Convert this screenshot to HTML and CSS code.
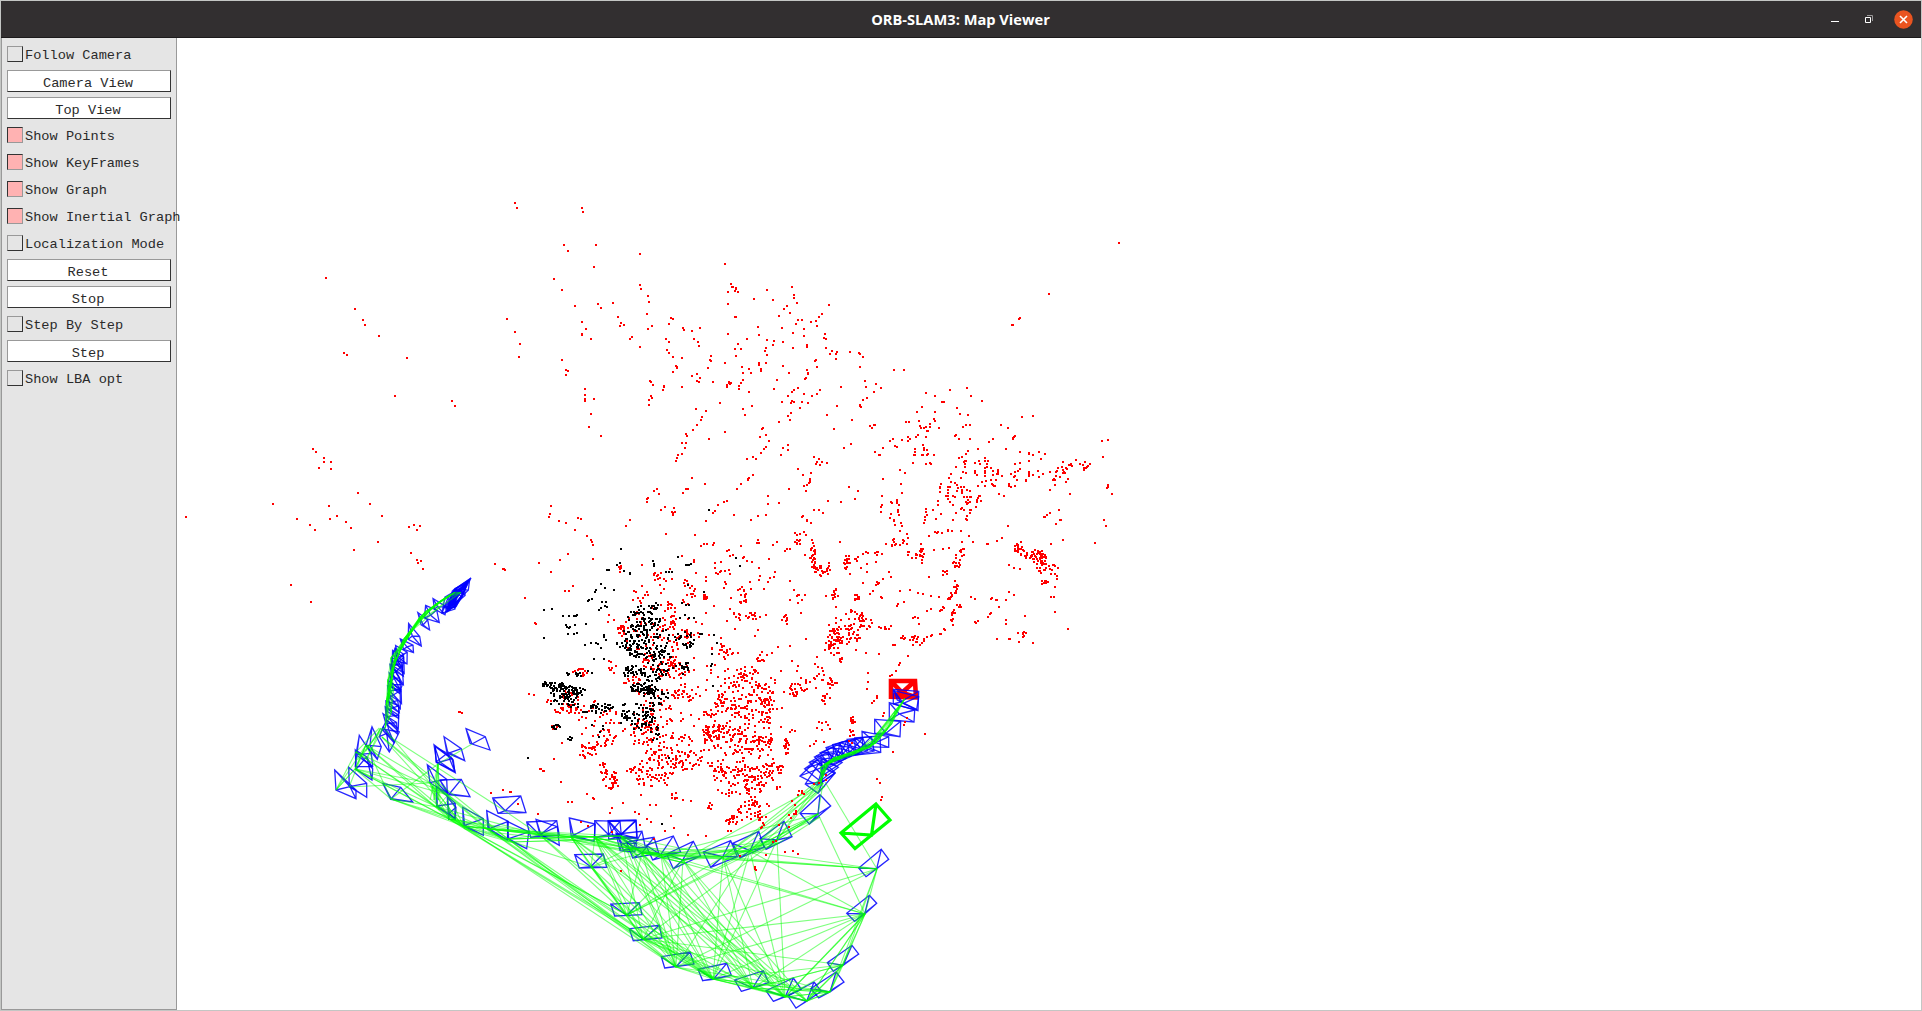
FILE: index.html
```html
<!DOCTYPE html>
<html lang="en">
<head>
<meta charset="utf-8">
<title>ORB-SLAM3: Map Viewer</title>
<link rel="stylesheet" href="styles.css">
</head>
<body>
<div class="window">
  <header class="titlebar">
    <h1 class="title">ORB-SLAM3: Map Viewer</h1>
    <div class="controls">
      <svg class="ctl" width="10" height="18" viewBox="0 0 10 18"><path d="M1 11.5h8" stroke="#fff" fill="none"/></svg>
      <svg class="ctl" width="10" height="18" viewBox="0 0 10 18"><path d="M3 5.5h5.5V11" stroke="#9a9898" fill="none"/><path d="M1.500 7.500h5v5h-5z" stroke="#fff" fill="none"/></svg>
      <svg class="ctl" width="19" height="19" viewBox="0 0 19 19"><circle cx="9.500" cy="9.500" r="9.300" fill="#e95420"/><path d="M6 6l7 7M13 6l-7 7" stroke="#fff" stroke-width="1.600" fill="none"/></svg>
    </div>
  </header>
  <main class="body">
    <aside class="panel">
      <label class="row"><span class="box"></span>Follow Camera</label>
      <button class="btn">Camera View</button>
      <button class="btn">Top View</button>
      <label class="row"><span class="box on"></span>Show Points</label>
      <label class="row"><span class="box on"></span>Show KeyFrames</label>
      <label class="row"><span class="box on"></span>Show Graph</label>
      <label class="row"><span class="box on"></span>Show Inertial Graph</label>
      <label class="row"><span class="box"></span>Localization Mode</label>
      <button class="btn">Reset</button>
      <button class="btn">Stop</button>
      <label class="row"><span class="box"></span>Step By Step</label>
      <button class="btn">Step</button>
      <label class="row"><span class="box"></span>Show LBA opt</label>
    </aside>
    <section class="view"><svg id="map" class="map" width="1744" height="972" viewBox="177 38 1744 972"></svg></section>
  </main>
</div>
<script src="map.js"></script>
</body>
</html>
```
FILE: styles.css
```css
* { box-sizing: border-box; }
body { margin: 0; background: #c4c4c4; }
.window {
  width: 1922px;
  height: 1011px;
  border: 1px solid #c4c6c4;
  display: flex;
  flex-direction: column;
  overflow: hidden;
}
.titlebar {
  height: 37px;
  flex: none;
  background: #322f30;
  border-bottom: 1px solid #1c1a1b;
  display: grid;
  grid-template-columns: 1fr auto 1fr;
  align-items: center;
  padding-right: 8px;
}
.title {
  grid-column: 2;
  margin: 0 0 0 7px;
  padding-top: 1px;
  font: 700 14.65px/35px "Open Sans", "Noto Sans", sans-serif;
  color: #fff;
  white-space: nowrap;
}
.controls { display: flex; justify-content: flex-end; align-items: center; }
.ctl { display: block; margin-left: 24px; }
.ctl:last-child { margin-left: 20px; }
.body { flex: 1; display: flex; min-height: 0; }
.panel {
  width: 176px;
  flex: none;
  background: #e5e5e5;
  border: 1px solid #999;
  border-top: 0;
  padding: 5px 5px 0;
  display: flex;
  flex-direction: column;
  gap: 5px;
  font: 13.65px/26px "Liberation Mono", monospace;
  color: #2a2a2a;
  position: relative;
  z-index: 1;
}
.row { height: 22px; display: flex; align-items: flex-start; gap: 2px; white-space: nowrap; }
.box {
  width: 16px;
  height: 16px;
  flex: none;
  margin-top: 3px;
  border: 1px solid;
  border-color: #999 #333 #333 #999;
}
.box.on { background: #ffb2b2; border-color: #333 #999 #999 #333; }
.btn {
  width: 164px;
  height: 22px;
  padding: 3px 2px 0 0;
  border: 1px solid;
  border-color: #999 #333 #333 #999;
  border-radius: 0;
  background: #fff;
  font: 13.65px/19px "Liberation Mono", monospace;
  color: #2a2a2a;
}
.view { flex: 1; background: #fff; }
.map { display: block; }
.dots-red { fill: #f00; shape-rendering: crispEdges; }
.dots-black { fill: #000; shape-rendering: crispEdges; }
.keyframe { fill: none; stroke: #00f; stroke-width: 1.3; stroke-opacity: .85; }
.edges { fill: none; stroke: #0f0; stroke-width: 1.1; stroke-opacity: .5; }
.camera { fill: none; stroke: #0f0; stroke-width: 3.2; }
.tracked { fill: none; stroke: #f00; stroke-width: 4.6; }
```
FILE: map.js
```js
// Map geometry is stored per tile: an origin in window pixels and coordinates in thirds of a pixel.
const TILE = { A: [540, 240], B: [860, 300], C: [780, 520], D: [540, 520], E: [620, 760], F: [320, 560] };

const red = {
A: `72 15 84 33 168 15 162 81 300 42 42 117 66 150 105 198 126 246 138 267 126 282 126 285 153 297 174 192 183 204 219 189 234 231 243 249 240 258 252 255 276 291 270 297 300 321 300 135 303 147 324 168 327 186 321 222 336 258 324 267 555 72 573 132 576 141 579 141 588 144 588 147 585 153 594 156 564 156 564 192 585 231 588 231 642 177 681 150 699 180 756 141 762 165 762 174 771 189 741 198 732 207 750 219 717 228 774 240 786 240 768 252 813 246 828 243 837 231 846 222 867 195 831 258 792 267 792 288 759 279 726 264 729 306 702 303 699 315 681 300 654 261 657 285 621 297 594 312 585 327 603 327 564 282 588 348 555 369 393 234 399 237 387 252 378 297 387 306 381 330 387 339 399 351 426 354 408 378 411 384 411 381 399 396 429 264 432 270 456 273 480 264 462 297 474 306 477 318 513 348 510 360 513 363 504 384 471 402 480 414 471 423 477 426 456 408 519 426 426 441 372 438 372 441 369 450 330 423 333 426 339 435 333 468 336 474 327 480 327 495 66 360 78 390 84 393 78 405 135 447 135 465 135 477 135 483 162 477 153 522 147 561 183 588 606 381 609 399 627 387 633 399 609 420 603 429 597 438 597 447 567 426 567 429 573 429 570 432 561 435 561 438 561 441 627 456 657 369 657 375 663 387 663 393 678 369 681 345 675 333 678 324 711 420 702 447 747 399 729 378 759 324 801 315 801 321 855 282 852 294 858 297 858 324 870 342 876 333 891 336 888 342 888 357 828 360 825 363 831 381 801 390 804 399 804 402 798 414 795 417 930 336 957 339 960 342 969 351 960 381 975 423 978 441 1008 432 1002 456 981 474 969 480 960 495 960 498 963 501 903 441 891 498 840 450 831 462 816 468 792 462 774 444 762 450 756 456 744 468 756 483 753 489 762 486 726 486 786 486 804 489 780 504 753 519 744 528 750 540 717 546 861 525 882 567 936 540 990 558 996 564 1002 555 1005 555 933 612 912 624 1005 636 1018 645 540 489 636 498 609 507 615 525 468 507 498 513 486 531 483 540 471 555 459 570 438 582 441 588 426 609 438 609 435 624 426 642 414 645 411 654 408 663 555 576 507 597 666 567 669 564 660 591 678 585 687 603 678 621 672 627 663 639 744 615 744 630 729 624 723 645 639 651 648 657 621 657 639 705 627 714 624 717 624 720 603 732 591 747 456 714 495 732 438 747 444 747 429 759 351 747 342 753 357 762 324 774 321 777 321 786 375 801 363 810 402 804 396 816 399 819 405 816 399 825 561 783 552 786 534 795 525 813 519 819 582 825 633 840 654 828 678 825 684 768 684 792 717 789 747 747 774 687 789 705 813 699 810 717 810 723 810 726 807 729 801 735 792 738 798 753 822 651 837 657 831 666 828 672 846 666 840 675 861 669 927 741 954 753 945 777 903 786 864 783 822 810 837 810 849 819 789 828 786 831 801 840 33 798 30 822 27 831 114 834 123 837 270 840`,
B: `480 54 456 75 459 75 63 264 102 210 132 210 198 279 225 288 246 306 252 306 270 270 321 264 333 288 366 303 291 324 300 342 324 345 186 321 171 336 225 336 222 357 225 363 177 363 180 378 183 384 192 384 198 381 210 372 210 381 201 393 204 393 237 384 138 366 147 366 174 405 168 411 198 411 144 411 150 417 144 423 126 420 99 417 90 423 105 438 111 441 69 444 60 465 165 447 165 456 162 465 165 465 189 435 192 444 192 450 201 450 186 465 189 465 204 462 201 465 222 465 159 489 198 492 210 489 213 492 309 381 318 375 330 375 288 405 285 408 297 417 330 417 423 375 444 384 486 351 519 348 465 408 462 411 459 414 459 417 387 426 399 417 354 447 438 447 480 456 507 459 507 462 519 465 537 456 555 462 543 477 297 474 306 471 318 462 324 453 288 501 309 516 315 483 312 486 318 483 315 492 315 501 318 519 345 489 357 483 360 492 375 474 375 483 384 483 381 492 381 501 393 504 399 513 399 525 414 510 414 516 414 522 411 522 426 528 345 513 345 519 351 525 375 504 375 513 375 519 375 528 354 558 366 546 378 543 375 558 393 540 396 552 399 555 402 558 405 558 408 540 453 522 465 492 480 489 480 507 474 513 465 516 465 528 462 531 471 540 465 558 453 561 447 552 447 558 498 540 498 543 507 516 507 522 507 528 519 525 507 483 534 513 537 531 549 522 570 516 570 570 579 540 582 537 585 540 588 516 591 513 594 504 600 531 588 528 606 501 609 486 609 510 612 516 609 519 615 519 621 507 618 504 627 495 630 495 633 492 636 498 648 480 660 492 669 495 675 486 672 504 672 510 678 504 681 501 684 498 690 492 624 537 618 546 585 555 630 582 744 555 744 561 741 564 756 582 729 471 726 423 744 420 732 660 738 678 705 729 417 582 432 588 597 630 570 639 561 645 555 651 552 651 588 672 600 660 603 660 444 678 120 510 135 519 69 537 123 552 126 579 66 588 63 621 66 615 63 636 93 606 96 609 111 600 111 606 111 609 117 615 114 630 114 636 117 645 93 642 90 654 102 660 273 522 267 534 273 546 243 552 240 561 240 564 240 576 285 549 303 534 291 555 264 561 270 561 264 570 264 579 258 588 264 588 264 597 270 606 279 588 285 591 294 564 291 573 303 561 312 561 306 570 306 576 306 579 321 570 330 573 312 591 321 591 330 591 333 591 324 600 318 606 324 609 330 606 321 612 279 615 306 624 303 627 312 630 330 630 333 630 330 639 288 639 348 621 351 606 351 600 354 594 357 588 360 588 363 603 234 603 234 615 219 630 243 642 228 657 198 627 198 636 201 645 195 651 195 660 279 660 318 657 321 660 321 648`,
C: `264 459 264 486 261 507 276 549 282 543 291 528 291 534 330 468 336 465 348 453 360 429 384 408 297 402 258 399 339 375 345 375 435 642 339 696 375 605 372 615 381 594 312 579 309 588 864 327 759 369 717 366 690 357 687 357 651 357 714 339 735 288 678 300 678 312 825 276 813 231 822 231 825 201 573 231 585 237 633 237 636 234 648 240 651 240 657 261 678 240 687 216 702 225 633 279 630 282 624 291 702 144 720 147 687 135 621 72 624 72 651 63 666 54 684 18 828 12 813 72 849 60 579 66 567 48 543 33 546 66 504 30 504 33 516 33 486 39 471 39 465 36 474 36 447 48 432 9 363 9 366 18 342 3 345 15 360 33 381 42 384 54 462 90 489 87 507 84 447 171 453 228 477 231 390 210 360 213 414 219 430 222 352 258 355 252 372 246 399 294 405 291 414 294 417 312 441 273 453 267 288 126 261 132 243 144 261 156 210 162 180 66 327 156 333 171 309 177 249 189 279 213 270 222 303 231 306 234 492 327 495 330 480 342 483 342 456 345 441 351 453 348 228 390 291 777 357 435`,
D: `57 3 78 9 105 30 141 48 153 60 156 66 159 75 60 120 33 156 84 102 159 117 75 213 87 213 99 198 258 18 270 0 378 42 465 45 483 78 492 72 501 72 519 75 522 69 498 3 603 78 633 0 654 60 651 69 657 69 699 75 711 66 561 93 567 90 579 105 543 126 525 129 525 144 540 156 528 159 555 153 567 150 498 171 498 183 621 123 636 126 657 144 687 117 741 87 750 87 702 171 690 174 684 186 660 168 657 180 630 186 462 120 306 135 765 39 792 36 801 3 813 9 633 207 672 207 207 285 222 300 204 306 9 753 3 747 42 717 66 669`,
E: `63 105 90 135 108 135 9 129 45 156 57 162 81 177 60 195 93 186 153 168 135 213 162 204 203 225 258 228 189 120 213 123 771 57 780 69 786 111 783 120 494 275 519 272 534 281 438 284 476 194 507 200 404 321 404 327 407 330 360 288 102 237 468 243 458 246 618 45 618 60 582 72 597 69 324 213 333 213 3 333`,
F: `294 8 303 2 309 27 525 12 549 27 552 27 554 30 657 9 615 114 645 188 648 191 627 402 642 405 417 456 420 456 426 459 513 698 549 690 570 695 573 695 594 732 654 762 660 627 663 627 672 632 669 632 723 666 744 726 756 726 822 717 819 714 801 702 804 798 783 785 870 758 876 744 909 729 876 816`
};

const black = {
A: `507 810`,
D: `12 270 36 267 69 288 87 288 102 288 108 288 111 285 138 312 78 315 81 321 87 324 90 321 105 315 84 342 102 342 111 339 12 354 135 375 153 369 168 369 174 372 183 384 192 345 192 351 198 360 162 417 192 417 144 243 147 240 156 237 165 216 168 210 183 192 195 204 222 210 177 270 183 264 195 258 201 261 186 246 198 246 201 150 207 150 231 135 240 129 243 87 252 153 270 162 270 159 339 123 342 132 342 138 378 156 387 156 396 156 414 111 438 135 444 135 447 135 453 132 588 114 600 138 444 195 426 249 438 255 447 255 435 285 420 294 447 294 462 294 492 216 519 498 516 402 516 432 513 438 531 369 522 345 486 342 480 342 144 453 156 459 387 714`,
E: `126 192`, F: `624 594`
};

// Isolated outliers, in overview units.
const far = `420 166 422 170 475 170 476 173 266 227 290 252 296 261 298 265 309 274 281 288 283 290 332 292 322 323 369 327 371 331 255 366 258 369 264 374 264 377 260 382 270 377 270 383 223 411 292 402 152 422 242 423 253 428 257 432 268 413 269 423 275 421 282 426 286 431 302 411 312 421 308 442 289 449 334 430 338 428 343 429 340 432 335 451 340 457 345 464 237 477 254 491 913 198 856 240 831 260 826 265 414 260 420 271 424 281 423 291`;

// Dense patches: x, y, rx, ry, count
const redPatches = {
D: [[310,340,60,60,45],[390,290,18,40,28],[400,450,45,25,40],[430,350,50,20,24],[340,430,30,25,24],[280,490,30,20,14],[310,510,20,15,10],[440,520,40,20,26],[390,400,25,35,18],[340,590,55,50,40],[300,640,50,30,40],[70,540,45,38,26],[120,455,20,15,12],[90,570,45,8,14],[170,600,60,50,30],[200,655,35,25,22],[150,690,35,22,24],[400,700,75,55,66],[430,720,50,30,30],[350,745,50,35,22],[280,750,20,10,12],[190,745,20,15,9],[600,520,60,55,74],[620,455,30,18,14],[680,560,16,65,46],[590,560,70,40,30],[570,640,65,25,50],[530,640,40,35,25],[640,600,45,16,14],[640,670,50,24,40],[685,660,15,10,14],[560,720,60,45,40],[660,740,60,38,36],[740,680,8,22,16],[720,750,10,20,8],[540,545,15,20,10],[510,580,20,10,10],[500,650,18,20,12],[545,390,35,12,9],[560,400,14,16,6],[660,410,20,15,10],[820,100,10,40,32],[785,60,22,18,9],[840,155,14,16,16],[865,155,5,25,8],[884,225,10,20,12],[610,225,12,30,13],[650,285,35,12,12],[445,210,22,40,16],[497,230,7,16,12],[350,170,25,14,12],[235,145,15,10,6],[300,225,30,25,12],[245,330,12,12,12],[735,300,10,20,8],[770,230,25,20,8],[590,290,12,15,7],[620,300,260,250,95],[560,600,200,160,90],[215,440,12,20,8],[880,360,16,50,20],[800,500,45,20,20],[835,460,25,20,10],[870,490,20,15,8],[765,522,8,6,8],[860,540,14,18,9],[850,620,25,15,7],[45,620,12,8,5]],
C: [[215,115,20,15,14],[195,140,8,10,5],[275,100,30,6,8],[350,72,30,14,14],[425,100,6,32,16],[395,105,30,12,8],[530,125,10,18,14],[548,95,8,12,8],[495,158,8,8,6],[527,200,6,18,9],[510,230,6,12,7],[520,290,6,25,11],[537,258,6,6,4],[485,265,6,14,5],[720,85,16,20,24],[775,112,22,22,50],[750,105,20,10,9],[790,145,18,12,12],[825,155,13,25,10],[790,187,12,5,7],[290,192,8,6,6],[230,235,8,12,10],[245,290,8,12,9],[200,340,40,30,46],[255,310,20,15,14],[205,290,25,20,8],[165,350,25,50,16],[315,322,18,10,8],[370,350,7,8,5],[412,362,20,14,16],[590,305,5,8,4],[730,343,8,6,6],[180,420,6,14,5],[150,490,14,15,8],[218,605,6,14,10],[212,650,10,20,8],[110,670,30,10,4]],
E: [[330,60,50,45,45],[100,60,50,25,28],[400,80,25,30,30],[160,108,10,12,7],[270,140,6,12,6],[405,150,45,28,42],[345,180,26,20,18],[425,185,7,18,8],[455,45,35,45,20],[515,150,14,28,8],[545,100,12,8,5]],
F: [[870,660,28,25,25],[880,662,10,12,6]]
};
const blackPatches = {
D: [[300,295,33,38,40],[342,258,13,12,10],[285,335,35,18,22],[290,385,34,24,46],[350,350,35,50,40],[320,350,60,70,30],[440,355,35,18,20],[440,382,12,10,6],[355,415,35,24,30],[280,455,32,17,34],[345,460,42,22,34],[310,505,38,14,54],[350,525,37,16,26],[300,590,42,36,56],[345,560,20,15,10],[430,445,30,18,16],[85,518,48,18,66],[55,500,25,14,20],[20,494,12,7,12],[110,462,30,6,12],[190,562,35,10,28],[150,577,30,5,8],[250,580,15,32,14],[50,620,12,8,12],[90,658,8,6,6],[340,640,20,20,10],[240,370,25,20,9],[80,550,50,12,18],[170,630,35,20,5]]
};

// Keyframe frusta: four image-plane corners followed by the optical centre.
const frusta = {
E: [[784,268,806,298,738,350,716,324,770,326],[748,406,770,430,704,484,680,460,734,462],[696,556,716,582,640,634,622,608,670,616],[648,636,672,666,596,714,572,686,630,696],[582,666,604,694,528,744,504,708,560,724],[520,654,544,688,460,724,438,692,496,710],[430,632,446,668,364,694,344,660,398,684],[320,610,334,646,248,662,234,628,280,658],[210,576,222,612,134,624,124,590,168,620],[118,496,126,534,40,542,28,506,70,538],[58,428,66,464,-16,468,-28,432,20,466],[600,104,632,138,568,192,540,160,594,162],[492,184,516,230,438,268,420,236,470,240],[416,214,432,262,360,294,338,250,390,272],[332,242,352,290,272,322,250,276,308,290],[220,244,242,288,160,326,140,282,188,300],[160,228,182,276,98,300,78,256,122,284],[102,232,116,280,38,294,20,246,66,278],[66,214,76,262,10,270,-10,222,40,262],[48,180,50,232,-34,238,-36,182,0,228],[604,0,646,38,594,100,556,72,608,66]],
F: [[438,506,496,530,510,570,450,550,456,552],[372,530,424,566,434,602,380,574,384,580],[342,554,396,596,406,638,350,608,360,606],[346,560,400,600,404,634,348,606,382,580],[322,614,380,658,382,700,330,668,346,664],[360,660,424,658,450,710,384,704,388,702],[518,714,602,708,618,758,534,760,556,752],[188,670,242,682,278,726,212,718,214,716],[86,622,140,670,140,712,88,678,88,680],[44,630,108,690,108,716,48,690,90,680],[118,526,154,580,158,620,106,620,108,584],[156,500,184,560,172,598,138,556,150,556],[106,570,158,626,156,660,108,628,140,590],[190,500,224,545,208,576,178,530,200,520],[200,480,238,516,222,548,186,508,206,510],[350,680,406,730,404,775,350,740,352,738],[382,712,408,742,406,778,386,778,388,760],[428,742,490,776,490,826,430,798,434,796],[500,752,565,784,562,840,504,808,508,806],[562,784,626,816,620,866,564,838,566,836],[620,786,710,782,718,826,632,832,660,826],[648,778,712,800,718,856,660,824,662,822],[748,774,826,792,822,844,754,830,760,826],[824,782,900,784,904,826,824,832,866,824],[866,784,948,782,952,836,880,830,904,822],[764,884,850,882,860,922,778,924,812,920],[888,820,950,850,944,876,900,872,906,850]],
C: [[340,508,416,514,414,572,340,552,362,546],[342,512,416,530,410,568,352,540,370,550],[328,548,404,570,402,606,328,600,358,582],[284,598,362,604,360,650,284,640,318,640],[246,634,326,650,326,682,248,680,288,668]]
};

let seed = 4711;
const rnd = () => (seed = (seed * 16807) % 2147483647) / 2147483647;
const jit = a => (rnd() * 2 - 1) * a;
const place = (t, x, y) => [TILE[t][0] + x / 3, TILE[t][1] + y / 3];
const svg = document.getElementById('map');
function draw(cls, d) {
  const p = document.createElementNS('http://www.w3.org/2000/svg', 'path');
  p.setAttribute('class', cls);
  p.setAttribute('d', d);
  svg.appendChild(p);
}
const dot = ([x, y]) => `M${Math.round(x - 1)} ${Math.round(y - 1)}h2v2h-2z`;
const line = (a, b) => `M${a[0].toFixed(1)} ${a[1].toFixed(1)}L${b[0].toFixed(1)} ${b[1].toFixed(1)}`;
function frustum(q) {
  const c = q.slice(0, 4), o = q[4];
  return 'M' + c.map(p => p.map(v => v.toFixed(1)).join(' ')).join('L') + 'Z' + c.map(p => line(o, p)).join('');
}
const pairs = s => { const n = s.trim().split(/\s+/).map(Number), r = []; for (let i = 0; i < n.length; i += 2) r.push([n[i], n[i + 1]]); return r; };

// Tracked camera
draw('tracked', frustum([place('C',333,483), place('C',405,483), place('C',408,532), place('C',333,530), place('C',366,518)]));

// Keyframes
for (const t in frusta) for (const f of frusta[t]) {
  const q = [];
  for (let i = 0; i < 10; i += 2) q.push(place(t, f[i], f[i + 1]));
  draw('keyframe', frustum(q));
}
function along(path, n) {
  const out = [];
  for (let i = 0; i < n; i++) {
    const u = i / (n - 1) * (path.length - 1), k = Math.min(Math.floor(u), path.length - 2), f = u - k;
    out.push([path[k][0] + (path[k + 1][0] - path[k][0]) * f, path[k][1] + (path[k + 1][1] - path[k][1]) * f]);
  }
  return out;
}
const arc = along([[384,728],[387,705],[389,685],[391,665],[394,655],[405,638],[419,620],[433,605],[446,595],[455,590]], 30);
arc.filter((p, i) => i > 0 && i < 24 && (i < 14 || i % 2)).forEach(([x, y], i) => {
  const w = i < 12 ? 11 : 12, h = i < 12 ? 13 : 11;
  draw('keyframe', frustum([[x + jit(2), y - 8 + jit(3)], [x + w + jit(2), y + jit(4)], [x + w + jit(2), y + h + jit(3)], [x + 1 + jit(3), y + 5 + jit(2)], [x + 3 + jit(3), y + 3]]));
});
for (let i = 0; i < 7; i++) {
  const u = i * 1.3;
  draw('keyframe', frustum([[471 - u, 578 + u], [467 + jit(2) - u / 2, 589 + u], [456 + jit(3) - u / 2, 606 + jit(2)], [446 + jit(3), 610 + jit(3)], [455 + jit(3), 590 + jit(3)]]));
}
draw('keyframe', frustum([[445,597],[457,590],[455,609],[442,613],[448,598]]));
const q0 = [[60,768],[106,728],[164,758],[112,798],[128,742]], q1 = [[224,655],[300,650],[302,694],[226,706],[262,680]];
for (let i = 0; i <= 9; i++) {
  const u = i / 9, b = Math.sin(u * Math.PI) * 22;
  draw('keyframe', frustum(q0.map((p, k) => place('C', p[0] + (q1[k][0] - p[0]) * u - b * .6, p[1] + (q1[k][1] - p[1]) * u - b + jit(3)))));
}

// Covisibility graph
const upper = [[430,783],[448,795],[437,807],[449,819],[463,826],[488,829],[508,839],[540,835],[571,837],[595,837],[621,836],[630,848],[642,853],[661,855],[683,860],[723,857],[750,851],[777,840],[818,814],[823,783]];
const low = [[591,867],[627,915],[643,939],[676,967],[713,979],[753,988],[785,997],[807,1001],[830,992],[843,965],[865,914],[877,869]];
const left = [[336,790],[349,787],[355,769],[366,745],[382,737],[391,799],[356,752]];
let g = '';
const link = (a, b, p) => { if (rnd() < p) g += line(a, b); };
const flush = () => { g.split('M').forEach(s => { if (s) draw('edges', 'M' + s); }); g = ''; };
const chain = (n, k, p) => n.forEach((a, i) => { for (let j = 1; j <= k && i + j < n.length; j++) link(a, n[i + j], p); });
chain(upper, 5, .8);
chain(upper.map(([x, y]) => [x + 2, y + 3]), 4, .35);
chain(low, 4, .85);
chain(arc.map(([x, y]) => [x + 1.5 + jit(4.5), y + 1 + jit(3)]), 6, .75);
upper.forEach((a, i) => low.forEach((b, j) => {
  if (i >= 8 && i <= 14 && j <= 7) link(a, b, .68);
  else if (i >= 15 && i <= 17 && j >= 1 && j <= 6) link(a, b, .55);
  else if (i >= 3 && i < 8 && j <= 4) link(a, b, .55);
}));
for (let j = 8; j < 12; j++) for (let i = 2; i < 8; i++) link(low[j], low[i], j < 10 ? .9 : .6);
[[12,11],[13,11],[15,11],[16,11],[11,10],[14,10],[16,10],[18,10]].forEach(([i, j]) => link(upper[i], low[j], 1));
link([825,782], [877,869], 1);
left.forEach(a => upper.slice(0, 7).forEach(b => link(a, b, .36)));
left.forEach(a => left.forEach(b => link(a, b, .2)));
link([472,744], [438,764], 1); link([438,764], [391,799], 1); link([390,737], [505,811], 1); link([505,811], [540,835], 1); link([384,728], [430,783], 1);
for (let i = 0; i < 6; i++) { link([382 + jit(3), 728], [360 + jit(8), 755 + jit(6)], 1); link([438, 764], [436 + jit(6), 800], 1); }
const right = along([[823,783],[820,768],[828,761],[845,757],[860,752],[872,745],[882,734],[892,716],[901,700]], 24).map(([x, y], i) => [x + jit(i > 13 ? 6 : 3), y + jit(2)]);
chain(right, 5, .9);
for (let i = 15; i < 18; i++) { link(upper[i], right[1], 1); link(upper[i], upper[18], 1); }
flush();

// Current camera
draw('camera', 'M876 804L890 820L855 848.500L841 833ZM876 804L871.500 835L841 833');

// Map points
function cloud(sets, patches) {
  let d = '';
  for (const t in sets) for (const [x, y] of pairs(sets[t])) d += dot(place(t, x, y));
  for (const t in patches) for (const [x, y, rx, ry, n] of patches[t]) for (let i = 0; i < n; i++) {
    const a = rnd() * 6.2832, r = Math.sqrt(rnd()) * 1.12;
    d += dot(place(t, x + rx * r * Math.cos(a), y + ry * r * Math.sin(a)));
  }
  return d;
}
draw('dots-red', cloud(red, redPatches) + pairs(far).map(([x, y]) => dot([x * 1.2258, y * 1.2258])).join(''));
draw('dots-black', cloud(black, blackPatches));
```
